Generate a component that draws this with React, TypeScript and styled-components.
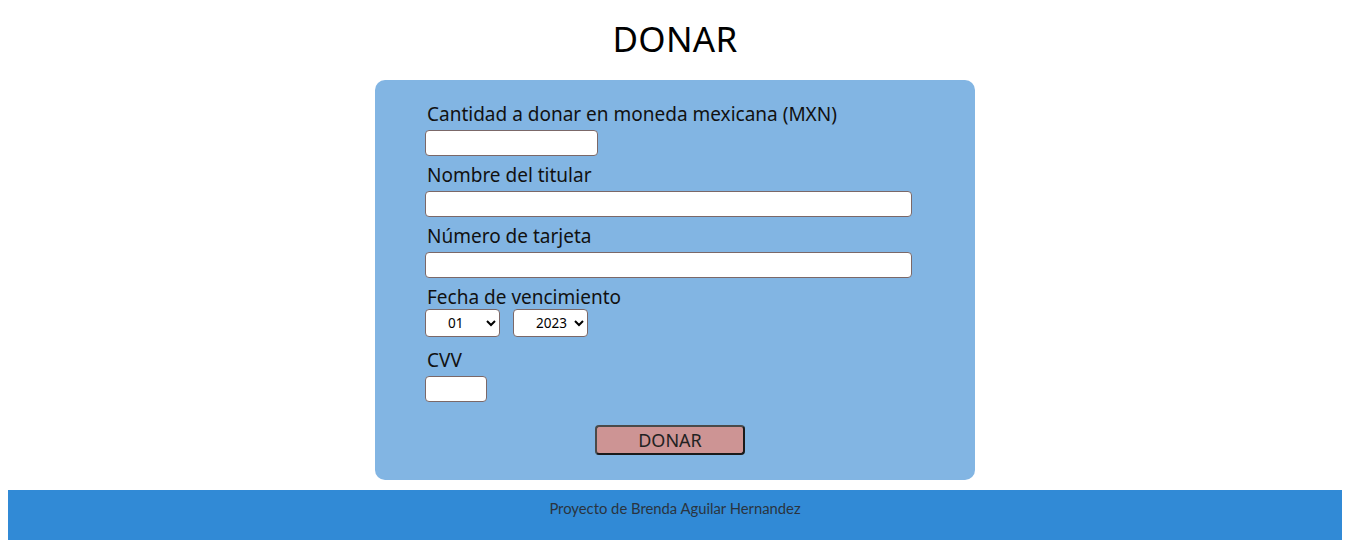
import styled, { createGlobalStyle } from "styled-components";

// Global reset-ish styles
const GlobalStyle = createGlobalStyle`
  body {
    margin: 8px;
    background: #ffffff;
    font-family: "Noto Sans", "Open Sans", sans-serif;
    color: #111111;
  }
`;

const meses = ["01", "02", "03", "04", "05", "06", "07", "08", "09", "10", "11", "12"];
const anios = ["2023", "2024", "2025", "2026", "2027", "2028"];

/**
 * Donation form page
 */
const App = () => {
  return (
    <>
      <GlobalStyle />
      <Page>
        <Title>DONAR</Title>

        {/* Card with the form */}
        <Card>
          <Field>
            <Label htmlFor="cantidad">Cantidad a donar en moneda mexicana (MXN)</Label>
            <TextInput id="cantidad" type="text" $width={173} />
          </Field>

          <Field>
            <Label htmlFor="titular">Nombre del titular</Label>
            <TextInput id="titular" type="text" $width={487} />
          </Field>

          <Field>
            <Label htmlFor="tarjeta">Número de tarjeta</Label>
            <TextInput id="tarjeta" type="text" $width={487} />
          </Field>

          <Field $gap={13}>
            <Label $tight>Fecha de vencimiento</Label>
            <SelectRow>
              <Select defaultValue="01">
                {meses.map((m) => (
                  <option key={m}>{m}</option>
                ))}
              </Select>
              <Select defaultValue="2023">
                {anios.map((a) => (
                  <option key={a}>{a}</option>
                ))}
              </Select>
            </SelectRow>
          </Field>

          <Field $gap={23}>
            <Label htmlFor="cvv">CVV</Label>
            <TextInput id="cvv" type="text" $width={62} />
          </Field>

          <ButtonRow>
            <SubmitButton type="button">DONAR</SubmitButton>
          </ButtonRow>
        </Card>

        {/* Footer */}
        <Footer>Proyecto de Brenda Aguilar Hernandez</Footer>
      </Page>
    </>
  );
};

const Page = styled.div`
  display: flex;
  flex-direction: column;
  align-items: center;
`;

const Title = styled.h1`
  margin: 8px 0 16px 0;
  height: 48px;
  line-height: 46px;
  font-family: "Noto Sans", sans-serif;
  font-weight: 400;
  font-size: 35px;
  letter-spacing: 0.3px;
  color: #000000;
`;

const Card = styled.form`
  box-sizing: border-box;
  width: 600px;
  height: 400px;
  background: #82b5e3;
  border-radius: 10px;
  padding: 24px 50px 0 50px;
  display: flex;
  flex-direction: column;
`;

const Field = styled.div<{ $gap?: number }>`
  display: flex;
  flex-direction: column;
  align-items: flex-start;
  margin-bottom: ${({ $gap }) => ($gap !== undefined ? $gap : 9)}px;
`;

const Label = styled.label<{ $tight?: boolean }>`
  display: block;
  height: 22px;
  line-height: 20px;
  margin: 0 0 ${({ $tight }) => ($tight ? 0 : 4)}px 2px;
  font-family: "Noto Sans", sans-serif;
  font-size: 19px;
  color: #111111;
  white-space: nowrap;
`;

const TextInput = styled.input<{ $width: number }>`
  box-sizing: border-box;
  width: ${({ $width }) => $width}px;
  height: 26px;
  border: 1px solid #7b6868;
  border-radius: 4px;
  background: #ffffff;
  padding: 0 4px;
  margin: 0;
`;

const SelectRow = styled.div`
  display: flex;
  gap: 13px;
`;

const Select = styled.select`
  box-sizing: border-box;
  width: 75px;
  height: 28px;
  border: 1px solid #7b6868;
  border-radius: 4px;
  background: #ffffff;
  padding: 0 0 0 18px;
  font-family: "Noto Sans", sans-serif;
  font-size: 13.5px;
  color: #000000;
`;

const ButtonRow = styled.div`
  display: flex;
  justify-content: center;
  padding-right: 10px;
`;

const SubmitButton = styled.button`
  box-sizing: border-box;
  width: 150px;
  height: 30px;
  background: #cd9494;
  border: 2px solid #1a1a1a;
  border-top-color: #4a4a4a;
  border-left-color: #4a4a4a;
  border-radius: 4px;
  font-family: "Noto Sans", sans-serif;
  font-size: 18px;
  line-height: 24px;
  color: #222222;
  padding: 0;
  cursor: pointer;
`;

const Footer = styled.footer`
  align-self: stretch;
  margin-top: 10px;
  height: 50px;
  background: #318ad6;
  text-align: center;
  padding-top: 9px;
  box-sizing: border-box;
  font-family: "Lato", sans-serif;
  font-size: 14.8px;
  color: #2a3440;
`;

export default App;
